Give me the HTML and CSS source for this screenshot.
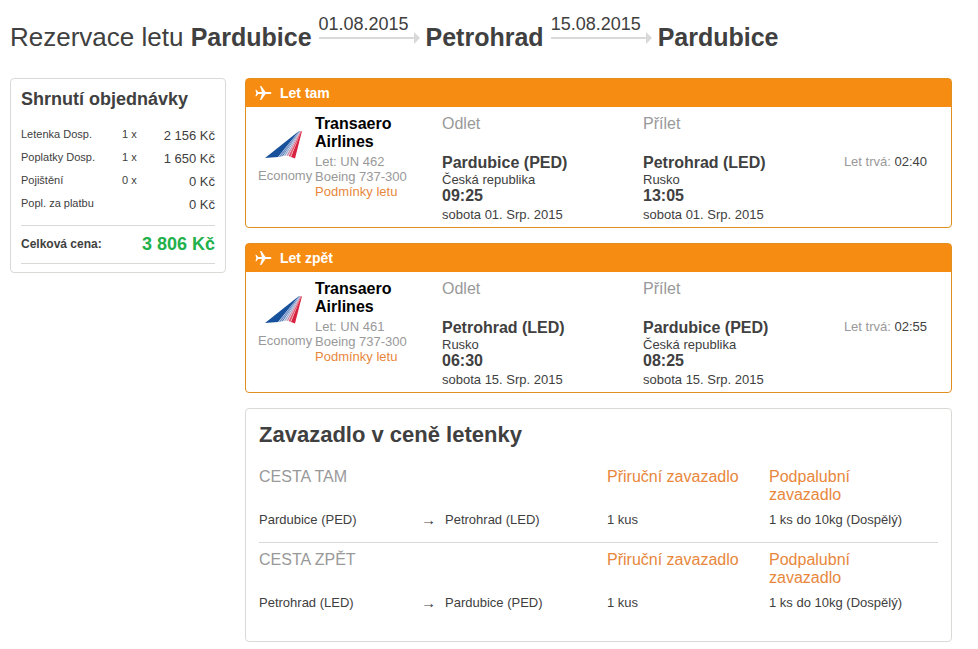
FILE: index.html
```html
<!DOCTYPE html>
<html lang="cs">
<head>
<meta charset="utf-8">
<title>Rezervace letu</title>
<link rel="stylesheet" href="styles.css">
</head>
<body>
<svg class="defs" aria-hidden="true">
  <symbol id="plane" viewBox="0 0 17 16">
    <path fill="#fff" d="M16.500 8c0-.7-1-1.100-2-1.100h-4L6.300 1H5l1.900 5.900H3.200L1.300 4.800H.4L1.300 8 .4 11.200h.9l1.900-2.100h3.700L5 15h1.300l4.200-5.900h4c1 0 2-.4 2-1.100z"/>
  </symbol>
  <symbol id="tail" viewBox="0 0 38 30">
    <path fill="#17509b" d="M0 28 34 1 13 27z"/>
    <path fill="#6f90c5" d="M13.500 27 34 1 35 1 16 26.500z"/>
    <path fill="#3c68ab" d="M16.500 26.500 35 1 18 26z"/>
    <path fill="#94a8d0" d="M18.800 26 35 1 35.500 1 20.800 25.500z"/>
    <path fill="#c98da8" d="M21.500 25.500 35.500 1 36 1 23 26z"/>
    <path fill="#e0586f" d="M23.600 26 36 1 36.500 1 25.400 27z"/>
    <path fill="#d8213f" d="M26 27 36 2 37 1 30 28.500z"/>
  </symbol>
</svg>
<header class="route">
  <h1 class="route-title">Rezervace letu <strong>Pardubice</strong></h1>
  <span class="leg-date">01.08.2015</span>
  <strong>Petrohrad</strong>
  <span class="leg-date">15.08.2015</span>
  <strong>Pardubice</strong>
</header>
<div class="layout">
  <aside class="summary">
    <h2>Shrnutí objednávky</h2>
    <table class="prices">
      <tr><th scope="row">Letenka Dosp.</th><td>1 x</td><td class="amount">2 156 Kč</td></tr>
      <tr><th scope="row">Poplatky Dosp.</th><td>1 x</td><td class="amount">1 650 Kč</td></tr>
      <tr><th scope="row">Pojištění</th><td>0 x</td><td class="amount">0 Kč</td></tr>
      <tr><th scope="row">Popl. za platbu</th><td></td><td class="amount">0 Kč</td></tr>
    </table>
    <div class="total"><span>Celková cena:</span><strong>3 806 Kč</strong></div>
  </aside>
  <main class="main">
    <section class="flight">
      <h2 class="flight-head"><svg class="plane"><use href="#plane"/></svg>Let tam</h2>
      <div class="flight-body">
        <div class="cabin"><svg class="tail"><use href="#tail"/></svg><span>Economy</span></div>
        <div class="carrier"><h3>Transaero Airlines</h3><p>Let: UN 462</p><p>Boeing 737-300</p><a href="#">Podmínky letu</a></div>
        <div class="stop"><p class="label">Odlet</p><p class="big">Pardubice (PED)</p><p class="country">Česká republika</p><p class="big">09:25</p><p class="date">sobota 01. Srp. 2015</p></div>
        <div class="stop"><p class="label">Přílet</p><p class="big">Petrohrad (LED)</p><p class="country">Rusko</p><p class="big">13:05</p><p class="date">sobota 01. Srp. 2015</p></div>
        <p class="duration">Let trvá: <span>02:40</span></p>
      </div>
    </section>
    <section class="flight">
      <h2 class="flight-head"><svg class="plane"><use href="#plane"/></svg>Let zpět</h2>
      <div class="flight-body">
        <div class="cabin"><svg class="tail"><use href="#tail"/></svg><span>Economy</span></div>
        <div class="carrier"><h3>Transaero Airlines</h3><p>Let: UN 461</p><p>Boeing 737-300</p><a href="#">Podmínky letu</a></div>
        <div class="stop"><p class="label">Odlet</p><p class="big">Petrohrad (LED)</p><p class="country">Rusko</p><p class="big">06:30</p><p class="date">sobota 15. Srp. 2015</p></div>
        <div class="stop"><p class="label">Přílet</p><p class="big">Pardubice (PED)</p><p class="country">Česká republika</p><p class="big">08:25</p><p class="date">sobota 15. Srp. 2015</p></div>
        <p class="duration">Let trvá: <span>02:55</span></p>
      </div>
    </section>
    <section class="baggage">
      <h2>Zavazadlo v ceně letenky</h2>
      <table>
        <colgroup><col class="c-from"><col class="c-arrow"><col class="c-to"><col class="c-hand"><col></colgroup>
        <tbody>
          <tr><th class="way" colspan="3">CESTA TAM</th><th>Přiruční zavazadlo</th><th>Podpalubní<br>zavazadlo</th></tr>
          <tr><td>Pardubice (PED)</td><td class="arrow">→</td><td>Petrohrad (LED)</td><td>1 kus</td><td>1 ks do 10kg (Dospělý)</td></tr>
        </tbody>
        <tbody>
          <tr><th class="way" colspan="3">CESTA ZPĚT</th><th>Přiruční zavazadlo</th><th>Podpalubní<br>zavazadlo</th></tr>
          <tr><td>Petrohrad (LED)</td><td class="arrow">→</td><td>Pardubice (PED)</td><td>1 kus</td><td>1 ks do 10kg (Dospělý)</td></tr>
        </tbody>
      </table>
    </section>
  </main>
</div>
</body>
</html>
```
FILE: styles.css
```css
* { box-sizing: border-box; }
body {
  margin: 0;
  padding: 12px 26px 7px 10px;
  background: #fff;
  color: #404040;
  font: 13px/15px "Liberation Sans", Arial, sans-serif;
}
h1, h2, h3, p { margin: 0; }
a { color: #e8873c; text-decoration: none; }
table { width: 100%; border-collapse: collapse; table-layout: fixed; }
th, td { padding: 0; text-align: left; vertical-align: top; font-weight: normal; }
.defs { display: none; }

.route { display: flex; height: 50px; gap: 7px; line-height: 50px; }
.route-title { font-size: 26px; font-weight: normal; }
.route strong { font-size: 25px; }
.leg-date {
  position: relative;
  width: 100px;
  height: 27px;
  border-bottom: 2px solid #d9d9d9;
  font-size: 18px;
  line-height: 24px;
}
.leg-date::after {
  content: "";
  position: absolute;
  right: -1px;
  bottom: -7px;
  border: 6px solid transparent;
  border-left-color: #d9d9d9;
  border-right-width: 0;
}

.layout { display: flex; align-items: flex-start; gap: 19px; margin-top: 16px; }
.summary { flex: 0 0 216px; padding: 8px 10px; border: 1px solid #d9d9d5; border-radius: 4px; }
.summary h2 { font-size: 18px; line-height: 24px; }
.prices { margin-top: 12px; font-size: 11px; line-height: 23px; }
.prices th { width: 101px; }
.prices .amount { width: 64px; padding-top: 2px; font-size: 13px; line-height: 21px; text-align: right; }
.total {
  display: flex;
  justify-content: space-between;
  margin-top: 10px;
  border: solid #d9d9d5;
  border-width: 1px 0;
  font-size: 12px;
  font-weight: bold;
  line-height: 37px;
}
.total strong { color: #22b04b; font-size: 18px; }

.main { flex: 1; display: flex; flex-direction: column; gap: 15px; }
.flight { border: 1px solid #e0901f; border-radius: 4px; }
.flight-head {
  display: flex;
  align-items: center;
  gap: 8px;
  height: 28px;
  padding-left: 9px;
  background: #f78c12;
  color: #fff;
  font-size: 14px;
}
.plane { width: 17px; height: 16px; }
.flight-body { display: grid; grid-template-columns: 57px 127px 201px 1fr auto; padding: 8px 24px 3px 12px; }
.cabin { padding-top: 15px; color: #999; }
.cabin span { display: block; }
.tail { display: block; width: 38px; height: 30px; margin: 0 0 8px 7px; }
.carrier { color: #999; }
.carrier h3 { width: 100px; margin-bottom: 3px; color: #000; font-size: 16px; line-height: 18px; }
.label { margin-bottom: 21px; color: #999; font-size: 16px; line-height: 18px; }
.big { font-size: 16px; font-weight: bold; line-height: 18px; }
.date { margin-top: 1px; line-height: 18px; }
.duration { padding-top: 39px; color: #999; }
.duration span { color: #404040; }

.baggage { padding: 12px 13px 16px; border: 1px solid #d9d9d5; border-radius: 4px; }
.baggage h2 { margin-bottom: 11px; font-size: 22px; line-height: 28px; }
.baggage tbody + tbody { border-top: 1px solid #d9d9d5; }
.baggage th { padding: 8px 0; color: #e8873c; font-size: 16px; line-height: 18px; }
.baggage .way { color: #999; }
.baggage td { padding-bottom: 14px; line-height: 16px; }
.baggage .arrow { font-size: 15px; }
.c-from { width: 162px; }
.c-arrow { width: 24px; }
.c-to { width: 162px; }
.c-hand { width: 162px; }
```
